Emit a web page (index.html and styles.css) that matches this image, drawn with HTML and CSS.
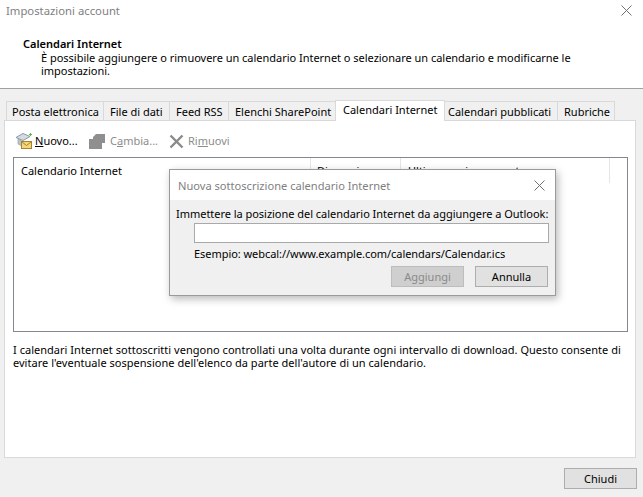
FILE: index.html
```html
<!DOCTYPE html>
<html lang="it">
<head>
<meta charset="utf-8">
<title>Impostazioni account</title>
<link rel="stylesheet" href="styles.css">
</head>
<body>
<div class="window">
  <header class="head">
    <div class="titlebar">
      <span class="title">Impostazioni account</span>
      <svg class="close" width="11" height="11" viewBox="0 0 11 11"><path d="M.5.5l10 10M10.500.5l-10 10" stroke="#707070" fill="none"/></svg>
    </div>
    <div class="intro">
      <h1 class="intro-title">Calendari Internet</h1>
      <p class="intro-text">È possibile aggiungere o rimuovere un calendario Internet o selezionare un calendario e modificarne le impostazioni.</p>
    </div>
  </header>
  <main class="main">
    <div class="tabs">
      <span class="tab t1">Posta elettronica</span>
      <span class="tab t2">File di dati</span>
      <span class="tab t3">Feed RSS</span>
      <span class="tab t4">Elenchi SharePoint</span>
      <span class="tab active">Calendari Internet</span>
      <span class="tab t6">Calendari pubblicati</span>
      <span class="tab t7">Rubriche</span>
    </div>
    <section class="panel">
      <div class="toolbar">
        <span class="tool tool-new">
          <svg width="18" height="18" viewBox="0 0 18 18">
            <path d="M1 5.500L8 1.500l7 3-7 4z" fill="#d5dbe2" stroke="#8d98a5"/>
            <path d="M3 7v5l4 2V9z" fill="#b9c2cc" stroke="#9aa4af" stroke-width=".7"/>
            <rect x="6.500" y="9.500" width="10" height="7" fill="#f4d67a" stroke="#a8842c"/>
            <path d="M7 10l4.500 3.500L16 10" fill="none" stroke="#a8842c"/>
            <path d="M14 2.500h3M15.500 1v3" stroke="#55b848"/>
          </svg>
          <span class="tool-label"><u>N</u>uovo...</span>
        </span>
        <span class="tool tool-edit off">
          <svg width="16" height="15" viewBox="0 0 16 15"><path d="M0 5h4V3l3-3h9v9h-3v6H0z" fill="#8f8f8f"/></svg>
          <span class="tool-label">C<u>a</u>mbia...</span>
        </span>
        <span class="tool tool-del off">
          <svg width="15" height="15" viewBox="0 0 15 15"><path d="M1.500 1.500l12 12M13.500 1.500l-12 12" stroke="#8a8a8a" stroke-width="2.400" fill="none"/></svg>
          <span class="tool-label">Ri<u>m</u>uovi</span>
        </span>
      </div>
      <div class="list">
        <div class="list-head">
          <span class="col col-name">Calendario Internet</span>
          <span class="col col-size">Dimensione</span>
          <span class="col col-date">Ultimo aggiornamento</span>
          <span class="col col-end"></span>
        </div>
      </div>
      <p class="note">I calendari Internet sottoscritti vengono controllati una volta durante ogni intervallo di download. Questo consente di evitare l'eventuale sospensione dell'elenco da parte dell'autore di un calendario.</p>
    </section>
  </main>
  <footer class="foot">
    <button class="btn close-btn" type="button">Chiudi</button>
  </footer>
  <div class="dialog">
    <div class="dialog-bar">
      <span class="dialog-title">Nuova sottoscrizione calendario Internet</span>
      <svg width="11" height="11" viewBox="0 0 11 11"><path d="M.5.5l10 10M10.500.5l-10 10" stroke="#707070" fill="none"/></svg>
    </div>
    <div class="dialog-body">
      <label class="dialog-label" for="url">Immettere la posizione del calendario Internet da aggiungere a Outlook:</label>
      <input class="dialog-input" id="url" type="text">
      <div class="dialog-example">Esempio: webcal://www.example.com/calendars/Calendar.ics</div>
      <div class="dialog-actions">
        <button class="btn add" type="button" disabled>Aggiungi</button>
        <button class="btn cancel" type="button">Annulla</button>
      </div>
    </div>
  </div>
</div>
</body>
</html>
```
FILE: styles.css
```css
* { box-sizing: border-box; }
html, body { margin: 0; padding: 0; }
body {
  font-family: "Noto Sans", "Open Sans", sans-serif;
  font-size: 11px;
  color: #000;
  overflow: hidden;
}
.window {
  position: relative;
  width: 643px;
  height: 497px;
  background: #f0f0f0;
  display: flex;
  flex-direction: column;
}
.head {
  height: 89px;
  flex: none;
  background: #fff;
  border-bottom: 1px solid #a0a0a0;
}
.titlebar {
  height: 37px;
  padding: 3px 11px 0 6px;
  display: flex;
  justify-content: space-between;
  align-items: flex-start;
}
.title { color: #7f7f7f; font-size: 11.300px; line-height: 16px; }
.close { margin-top: 2px; }
.intro { padding-left: 23px; }
.intro-title { margin: 0; font-size: 11px; font-weight: 600; line-height: 13px; }
.intro-text { margin: 1px 40px 0 18px; line-height: 13px; letter-spacing: -.02px; }
.main {
  flex: none;
  height: 369px;
  padding: 11px 7px 0 4px;
  display: flex;
  flex-direction: column;
}
.tabs { height: 20px; display: flex; align-items: flex-end; padding-left: 2px; flex: none; position: relative; z-index: 1; }
.tab {
  height: 19px;
  line-height: 18px;
  padding: 1px 0 0 5px;
  background: #f0f0f0;
  border: 1px solid #d9d9d9;
  border-bottom: 0;
  margin-right: -1px;
  white-space: nowrap;
  flex: none;
}
.t1 { width: 98px; }
.t2 { width: 67px; padding-left: 6px; }
.t3 { width: 60px; padding-left: 6px; }
.t4 { width: 108px; padding-left: 6px; }
.t6 { width: 114px; padding-left: 3px; }
.t7 { width: 58px; padding-left: 6px; }
.active {
  width: 110px;
  height: 21px;
  background: #fff;
  margin-bottom: -1px;
  padding: 0 0 0 7px;
  line-height: 18px;
}
.panel {
  height: 338px;
  background: #fff;
  border: 1px solid #d9d9d9;
  padding: 0 7px 0 8px;
  flex: none;
}
.toolbar { height: 36px; display: flex; align-items: center; padding: 4px 0 0 2px; }
.tool { display: inline-flex; align-items: center; gap: 4px; }
.tool-new { width: 74px; gap: 2px; }
.tool-edit { width: 80px; gap: 5px; }
.off { color: #8c8c8c; }
.tool-label { line-height: 16px; }
.list { height: 175px; border: 1px solid #828790; background: #fff; }
.list-head { display: flex; height: 25px; }
.col { padding: 5px 0 0 7px; border-right: 1px solid #e5e5e5; white-space: nowrap; line-height: 15px; }
.col-name { width: 297px; }
.col-size { width: 90px; padding-left: 6px; }
.col-date { width: 209px; padding-left: 7px; }
.col-end { border: 0; }
.note { margin: 11px 0 0; line-height: 13px; width: 615px; letter-spacing: .025px; }
.foot { flex: 1; display: flex; justify-content: flex-end; align-items: flex-start; padding: 10px 6px 0 0; }
.btn {
  font: inherit;
  height: 21px;
  padding: 0;
  background: #e1e1e1;
  border: 1px solid #adadad;
  color: #000;
}
.close-btn { width: 73px; }
.dialog {
  position: absolute;
  left: 169px;
  top: 169px;
  width: 387px;
  height: 127px;
  background: #f0f0f0;
  border: 1px solid #9a9a9a;
  box-shadow: 2px 3px 8px rgba(0, 0, 0, .28);
  display: flex;
  flex-direction: column;
}
.dialog-bar {
  height: 30px;
  flex: none;
  background: #fff;
  display: flex;
  justify-content: space-between;
  align-items: center;
  padding: 0 10px 0 8px;
}
.dialog-title { color: #7f7f7f; font-size: 11.100px; }
.dialog-body { padding: 6px 6px 0 6px; display: flex; flex-direction: column; }
.dialog-label { line-height: 15px; white-space: nowrap; letter-spacing: -.03px; }
.dialog-input {
  display: block;
  width: 355px;
  height: 20px;
  margin: 2px 0 0 18px;
  padding: 0;
  border: 1px solid #a9a9a9;
  background: #fff;
}
.dialog-example { margin: 3px 0 0 18px; line-height: 15px; letter-spacing: -.05px; }
.dialog-actions { display: flex; justify-content: flex-end; gap: 11px; margin-top: 5px; padding-right: 1px; }
.add { width: 73px; background: #cfcfcf; border-color: #bdbdbd; color: #8a8a8a; }
.cancel { width: 73px; }
```
